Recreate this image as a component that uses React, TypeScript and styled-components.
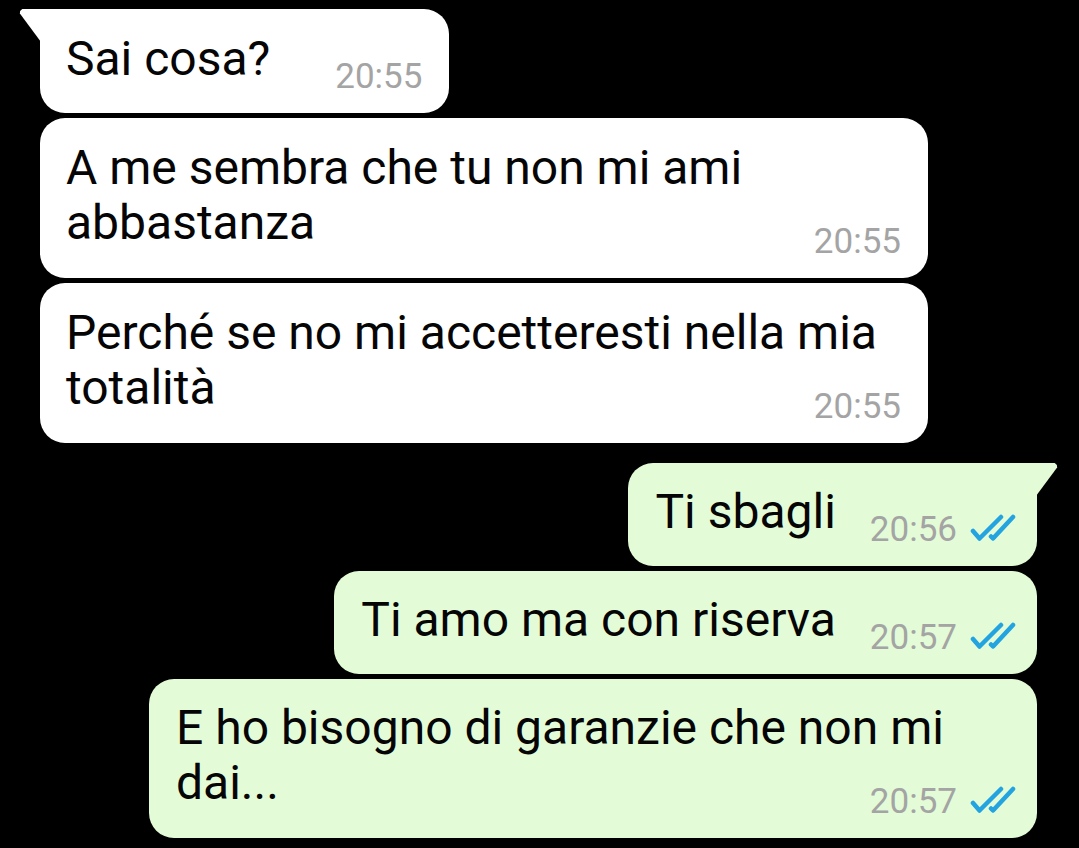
import styled, { createGlobalStyle } from 'styled-components'

const GlobalStyle = createGlobalStyle`
  html, body {
    margin: 0;
    padding: 0;
    background: #000;
  }
  body {
    font-family: Roboto, "Noto Sans", "Liberation Sans", sans-serif;
    -webkit-font-smoothing: antialiased;
  }
`

interface ChatItem {
  text: string
  time: string
  out?: boolean
  stack?: boolean
  first?: boolean
  newGroup?: boolean
}

const messages: ChatItem[] = [
  { text: 'Sai cosa?', time: '20:55', first: true },
  { text: 'A me sembra che tu non mi ami abbastanza', time: '20:55', stack: true },
  { text: 'Perché se no mi accetteresti nella mia totalità', time: '20:55', stack: true },
  { text: 'Ti sbagli', time: '20:56', out: true, first: true, newGroup: true },
  { text: 'Ti amo ma con riserva', time: '20:57', out: true },
  { text: 'E ho bisogno di garanzie che non mi dai...', time: '20:57', out: true, stack: true },
]

const Screen = styled.div`
  width: 1079px;
  height: 848px;
  box-sizing: border-box;
  padding: 9px 42px 0 40px;
  display: flex;
  flex-direction: column;
  overflow: hidden;
`

const Row = styled.div<{ $out?: boolean; $newGroup?: boolean }>`
  display: flex;
  justify-content: ${(p) => (p.$out ? 'flex-end' : 'flex-start')};
  margin-top: ${(p) => (p.$newGroup ? '20px' : '5px')};
  &:first-child {
    margin-top: 0;
  }
`

const Bubble = styled.div<{ $out?: boolean; $stack?: boolean; $tail?: boolean }>`
  position: relative;
  max-width: 888px;
  box-sizing: border-box;
  display: flex;
  flex-direction: ${(p) => (p.$stack ? 'column' : 'row')};
  align-items: ${(p) => (p.$stack ? 'stretch' : 'flex-end')};
  padding: ${(p) => (p.$out ? '21px 21px 16px 27px' : '22px 27px 16px 26px')};
  background: ${(p) => (p.$out ? '#e3fcd7' : '#ffffff')};
  border-radius: 25px;
  ${(p) =>
    p.$tail &&
    (p.$out ? 'border-top-right-radius: 0;' : 'border-top-left-radius: 0;')}

  &::before {
    content: '';
    display: ${(p) => (p.$tail ? 'block' : 'none')};
    position: absolute;
    top: 0;
    ${(p) => (p.$out ? 'right: -21px;' : 'left: -21px;')}
    width: 22px;
    height: 33px;
    background: inherit;
    clip-path: ${(p) =>
      p.$out
        ? 'polygon(0 0, 85% 0, 95% 6%, 96% 14%, 0 100%)'
        : 'polygon(100% 0, 15% 0, 5% 6%, 4% 14%, 100% 100%)'};
  }
`

const Text = styled.div<{ $stack?: boolean }>`
  font-size: 48px;
  line-height: 55px;
  color: #050505;
  margin-bottom: ${(p) => (p.$stack ? '0' : '11px')};
  white-space: ${(p) => (p.$stack ? 'normal' : 'nowrap')};
`

const Meta = styled.div<{ $out?: boolean; $stack?: boolean }>`
  display: flex;
  align-items: center;
  gap: 13px;
  flex-shrink: 0;
  align-self: flex-end;
  margin-left: ${(p) => (p.$stack ? '0' : p.$out ? '34px' : '65px')};
  margin-top: ${(p) => (p.$stack ? '-28px' : '0')};
  height: 40px;
`

const Time = styled.span`
  font-size: 35px;
  line-height: 40px;
  color: #a4a4a4;
`

const Ticks = () => (
  <svg width="46" height="28" viewBox="0 0 46 28" style={{ marginTop: -4 }}>
    <g fill="none" stroke="#23a3e0" strokeWidth="4.5" strokeLinecap="round" strokeLinejoin="round">
      <path d="M3 17 L9.5 24.5 L31 3" />
      <path d="M21 22.5 L23 24.5 L43 3" />
    </g>
  </svg>
)

const Message = ({ item }: { item: ChatItem }) => (
  <Row $out={item.out} $newGroup={item.newGroup}>
    <Bubble $out={item.out} $stack={item.stack} $tail={item.first}>
      <Text $stack={item.stack}>{item.text}</Text>
      <Meta $out={item.out} $stack={item.stack}>
        <Time>{item.time}</Time>
        {item.out && <Ticks />}
      </Meta>
    </Bubble>
  </Row>
)

export default function App() {
  return (
    <>
      <GlobalStyle />
      <Screen>
        {messages.map((m, i) => (
          <Message key={i} item={m} />
        ))}
      </Screen>
    </>
  )
}
